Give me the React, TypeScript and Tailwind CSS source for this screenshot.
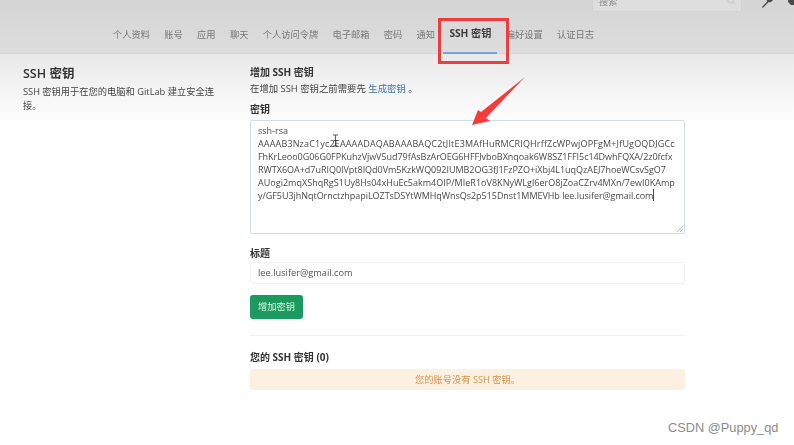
import React from "react";

const font = { fontFamily: '"Open Sans","Noto Sans CJK SC",sans-serif' };
const tabs = [
  ["个人资料", 0],
  ["账号", 0],
  ["应用", 0],
  ["聊天", 0],
  ["个人访问令牌", 0],
  ["电子邮箱", 0],
  ["密码", 0],
  ["通知", 0],
  ["SSH 密钥", 1],
  ["偏好设置", 0],
  ["认证日志", 0],
] as const;

const keyLines = [
  ["ssh-rsa", ""],
  ["AAAAB3NzaC1yc2EAAAADAQABAAABAQC2tJItE3MAfHuRMCRIQHrffZcWPwjOPFgM+JfUgOQDJGCc", "tracking-[0.16px]"],
  ["FhKrLeoo0G06G0FPKuhzVjwV5ud79fAsBzArOEG6HFFJvboBXnqoak6W8SZ1FFI5c14DwhFQXA/2z0fcfx", "tracking-[-0.04px]"],
  ["RWTX6OA+d7uRIQ0IVpt8IQd0Vm5KzkWQ092IUMB2OG3fJ1FzPZO+iXbj4L1uqQzAEJ7hoeWCsvSgO7", "tracking-[-0.025px]"],
  ["AUogi2mqXShqRgS1Uy8Hs04xHuEc5akm4OIP/MIeR1oV8KNyWLgl6erO8jZoaCZrv4MXn/7ewI0KAmp", "tracking-[0.025px]"],
  ["y/GF5U3jhNqtOrnctzhpapiLOZTsDSYtWMHqWnsQs2p515Dnst1MMEVHb lee.lusifer@gmail.com", "tracking-[-0.04px] flex"],
];

export default function App() {
  return (
    <div
      className="relative w-[794px] h-[445px] overflow-hidden bg-[linear-gradient(#d5d5d5_0px,#dddddd_53px,#e9e9e9_55px,#ffffff_125px)] text-[#2e2e2e]"
      style={font}
    >
      <div className="blur-[0.5px]">
        {/* top bar */}
        <div className="h-[12px] flex pl-[592px] gap-[20px] overflow-hidden">
          <div className="w-[150px] h-[12px] shrink-0 bg-[#dedede] border border-t-0 border-[#d2d2d2] rounded-b-[2px] flex items-start justify-between pl-[6px] pr-[5px] text-[9.25px] leading-[6px] text-[#8a8a8a]">
            <span className="-mt-[1px]">搜索</span>
            <svg width="9" height="9" viewBox="0 0 24 24" fill="none" stroke="#c4c4c4" strokeWidth="2.5" className="-mt-[3px]">
              <circle cx="10" cy="8" r="8" />
              <path d="M16 14l6 6" />
            </svg>
          </div>
          <div className="flex gap-[14px] shrink-0 -mt-[6px] h-[15px]">
            <svg width="12" height="15" viewBox="0 0 14 15" fill="#4a4a4a" className="shrink-0">
              <path d="M1 15l-1-1 6-6.5C5 5 6.5 2 9.5 1.5c1 0 1.5 0 2 .3L9 4l1.5 1.5L13 3.3c.4 2-1 4.4-3 5-1 .2-1.6.1-2.2-.2z" />
            </svg>
            <svg width="10" height="12" viewBox="0 0 10 12" fill="#4a4a4a" className="shrink-0">
              <path d="M0 5h10v3l-3 3H3L0 8z" />
            </svg>
          </div>
        </div>

        {/* tabs */}
        <nav className="h-[42px] border-b border-[#d8d8d8] flex gap-[14.3px] pl-[113px] text-[9.25px] text-[#777]">
          {tabs.map(([t, active]) => (
            <div
              key={t}
              className={
                active
                  ? "h-[42px] px-[6px] -mx-[6px] flex items-center justify-center pt-[3px] text-[10.2px] font-bold text-[#3a3a3a] border-b-2 border-[#7aa3cf]"
                  : "h-[41px] flex items-center pt-[4px]"
              }
            >
              {t}
            </div>
          ))}
        </nav>

        {/* content */}
        <main className="flex pl-[23px] pt-[12px]">
          <aside className="w-[227px] shrink-0">
            <h2 className="text-[12.5px] leading-[16px] font-semibold text-[#333]">SSH 密钥</h2>
            <p className="w-[196px] mt-[3px] text-[9.25px] leading-[14px] text-[#444]">
              SSH 密钥用于在您的电脑和 GitLab 建立安全连接。
            </p>
          </aside>

          <section className="w-[435px] shrink-0">
            <h3 className="text-[10px] leading-[12px] font-bold text-[#333]">增加 SSH 密钥</h3>
            <p className="mt-[5px] text-[9.4px] leading-[12px] text-[#444]">
              在增加 SSH 密钥之前需要先 <span className="text-[#3777b0]">生成密钥</span> 。
            </p>
            <label className="block mt-[8px] text-[10px] leading-[13px] font-bold text-[#333]">密钥</label>

            <div className="relative mt-[4px] h-[114px] bg-white border border-[#d3dce6] rounded-[2px] pl-[7px] pt-[3px] text-[9px] leading-[13.1px] text-[#4a4a4a] whitespace-nowrap">
              {keyLines.map(([l, cls], i) => (
                <div key={i} className={cls}>
                  {l}
                  {i === 5 && <span className="border-r border-[#444] h-[12px]" />}
                </div>
              ))}
              <svg className="absolute right-[1px] bottom-[1px]" width="6" height="6" viewBox="0 0 6 6" stroke="#aaa" strokeWidth="0.8">
                <path d="M0 6L6 0M3 6L6 3" />
              </svg>
            </div>

            <label className="block mt-[13px] text-[10px] leading-[13px] font-bold text-[#333]">标题</label>
            <div className="mt-[2px] h-[22px] bg-white border border-[#f0f0f0] rounded-[2px] pl-[7px] flex items-center text-[9.25px] text-[#555]">
              lee.lusifer@gmail.com
            </div>

            <button className="block mt-[11px] w-[53px] h-[24px] bg-[#1a9a5c] rounded-[3px] text-[9.25px] text-[#d8f3e4]">
              增加密钥
            </button>

            <hr className="mt-[16px] border-[#eeeeee]" />

            <h3 className="mt-[15px] text-[10px] leading-[12px] font-bold text-[#333]">您的 SSH 密钥 (0)</h3>
            <div className="mt-[6px] h-[21px] bg-[#fdf0e0] rounded-[3px] flex items-center justify-center text-[9.25px] text-[#d9924a]">
              您的账号没有 SSH 密钥。
            </div>
          </section>
        </main>
      </div>

      {/* annotations */}
      <div className="absolute left-[438px] top-[18px] w-[71px] h-[46px] border-[3px] border-[#f23b3b]" />
      <svg className="absolute left-[470px] top-[76px]" width="58" height="50" viewBox="0 0 58 50" fill="#f43c3c">
        <path d="M55 1 L11 36 L8 34 L2 49 L20 45 L16 42 Z" />
      </svg>
      <svg className="absolute left-[332px] top-[134px]" width="7" height="13" viewBox="0 0 7 13" fill="none" stroke="#333" strokeWidth="0.8">
        <path d="M1 1h5M3.5 1v11M1 12h5M1.5 6.5h4" />
      </svg>
      <div className="absolute left-[668px] top-[420px] text-[12.8px] leading-[16px] text-[#8c8c8c]" style={{ fontFamily: '"Liberation Sans",sans-serif' }}>
        CSDN @Puppy_qd
      </div>
    </div>
  );
}
